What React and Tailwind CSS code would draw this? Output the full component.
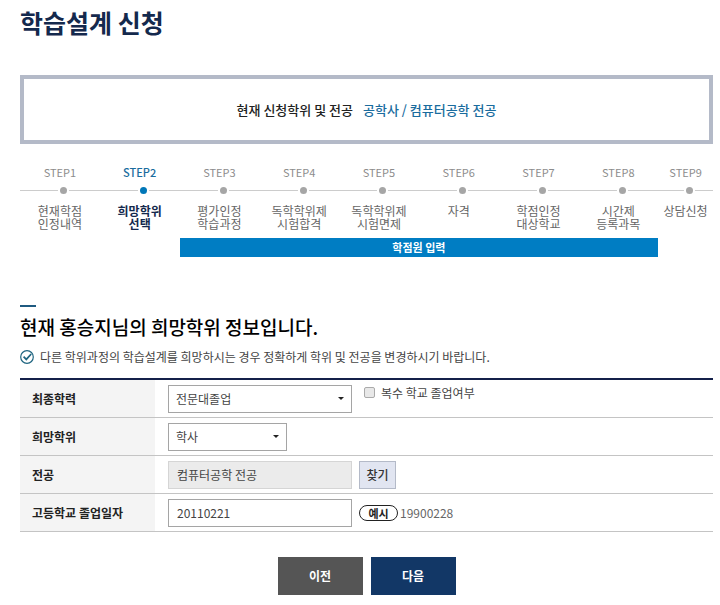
const steps = [
  { id: 1, lines: ['현재학점', '인정내역'] },
  { id: 2, lines: ['희망학위', '선택'], active: true },
  { id: 3, lines: ['평가인정', '학습과정'] },
  { id: 4, lines: ['독학학위제', '시험합격'] },
  { id: 5, lines: ['독학학위제', '시험면제'] },
  { id: 6, lines: ['자격'] },
  { id: 7, lines: ['학점인정', '대상학교'] },
  { id: 8, lines: ['시간제', '등록과목'] },
  { id: 9, lines: ['상담신청'] },
];

function Step({ step }) {
  return (
    <li
      aria-current={step.active ? 'step' : undefined}
      className="flex flex-col items-center text-center"
    >
      <span className={step.active ? 'text-[11px] leading-4 font-medium text-[#1a6c9e]' : 'text-[11px] leading-4 text-[#8c8c8c]'}>
        STEP{step.id}
      </span>
      <span className="mt-1 grid h-3 w-full grid-cols-[1fr_7px_1fr] items-center">
        <span className="-mr-1 h-px bg-[#ccc]" />
        <span
          className={
            step.active
              ? 'z-10 ml-1 size-[7px] rounded-full bg-[#0077b8] ring-2 ring-white'
              : 'z-10 ml-1 size-[7px] rounded-full bg-[#a6a6a6] ring-2 ring-white'
          }
        />
        <span className="h-px bg-[#ccc]" />
      </span>
      <span
        className={
          step.active
            ? 'mt-2 text-xs leading-[13px] font-bold whitespace-nowrap text-[#14294d]'
            : 'mt-2 text-xs leading-[13px] whitespace-nowrap text-[#666]'
        }
      >
        {step.lines.map((line) => (
          <span key={line} className="block">{line}</span>
        ))}
      </span>
    </li>
  );
}

function Select({ id, value, className }) {
  return (
    <span className={`relative inline-block ${className}`}>
      <select
        id={id}
        defaultValue={value}
        className="block h-7 w-full appearance-none border border-[#a5a5a5] bg-white px-[7px] text-xs text-[#444]"
      >
        <option>{value}</option>
      </select>
      <svg viewBox="0 0 6 3" className="pointer-events-none absolute top-3 right-2 h-[3px] w-1.5 fill-[#222]">
        <path d="M0 0h6L3 3z" />
      </svg>
    </span>
  );
}

function Row({ label, htmlFor, children }) {
  return (
    <tr className="h-[38px]">
      <th scope="row" className="w-[135px] border-b border-[#c4c4c4] bg-[#f4f4f4] p-0 pl-3 text-left font-bold text-[#222]">
        <label htmlFor={htmlFor}>{label}</label>
      </th>
      <td className="border-b border-[#c4c4c4] p-0 pl-[13px]">
        <div className="flex items-center">{children}</div>
      </td>
    </tr>
  );
}

export default function App() {
  return (
    <main className="bg-white pr-[7px] pb-2 pl-5 font-['Noto_Sans_CJK_KR','Noto_Sans',sans-serif] text-xs text-[#444]">
      <h1 className="pt-1 text-[25px] leading-9 font-bold text-[#14294d]">학습설계 신청</h1>

      <p className="mt-[35px] flex h-[69px] items-center justify-center gap-2.5 border-4 border-[#b4bac8] text-[13px] font-medium">
        <span className="text-[#222]">현재 신청학위 및 전공</span>
        <span className="text-[#1a6c9e]">공학사 / 컴퓨터공학 전공</span>
      </p>

      <ol className="mt-5 grid grid-cols-[repeat(8,80fr)_55fr]">
        {steps.map((step) => (
          <Step key={step.id} step={step} />
        ))}
      </ol>
      <div className="mt-2 grid grid-cols-[repeat(8,80fr)_55fr]">
        <p className="col-start-3 col-end-9 bg-[#007dc3] text-center text-[11px] leading-[19px] font-bold text-white">
          학점원 입력
        </p>
      </div>

      <section className="mt-12">
        <div className="h-0.5 w-4 bg-[#1f5a80]" />
        <h2 className="mt-1.5 text-[19px] leading-7 font-medium text-black">현재 홍승지님의 희망학위 정보입니다.</h2>
        <p className="mt-1.5 flex items-center gap-1.5 leading-5">
          <svg viewBox="0 0 14 14" className="size-3.5 fill-none stroke-[#1f6580]" aria-hidden="true">
            <circle cx="7" cy="7" r="6.3" strokeWidth="1.2" />
            <path d="M3.6 6.6L6.3 9.4L11.2 4" strokeWidth="1.7" />
          </svg>
          다른 학위과정의 학습설계를 희망하시는 경우 정확하게 학위 및 전공을 변경하시기 바랍니다.
        </p>

        <table className="mt-[11px] w-full border-separate border-spacing-0 border-t-2 border-[#14204a]">
          <tbody>
            <Row label="최종학력" htmlFor="education">
              <Select id="education" value="전문대졸업" className="w-[184px]" />
              <label className="ml-3 flex items-center gap-1.5 self-start">
                <input type="checkbox" className="size-[11px] appearance-none rounded-[2px] border border-[#aaa] bg-[#e8e8e8]" />
                복수 학교 졸업여부
              </label>
            </Row>
            <Row label="희망학위" htmlFor="degree">
              <Select id="degree" value="학사" className="w-[119px]" />
            </Row>
            <Row label="전공" htmlFor="major">
              <input id="major" readOnly defaultValue="컴퓨터공학 전공" className="h-7 w-[184px] border border-[#d5d5d5] bg-[#ebebeb] px-2" />
              <button type="button" className="ml-[7px] h-7 w-[37px] border border-[#b4bac8] bg-[#e1e5f1] font-medium text-[#333]">찾기</button>
            </Row>
            <Row label="고등학교 졸업일자" htmlFor="graduation">
              <input id="graduation" defaultValue="20110221" className="h-7 w-[184px] border border-[#a5a5a5] bg-white px-2" />
              <span className="ml-[7px] h-4 w-[39px] rounded-full border border-[#222] text-center text-[11px] leading-[14px] font-bold text-[#222]">예시</span>
              <span className="ml-0.5 text-[#666]">19900228</span>
            </Row>
          </tbody>
        </table>
      </section>

      <div className="mt-[25px] flex justify-center gap-2">
        <button type="button" className="h-[38px] w-[85px] bg-[#555] font-bold text-white">이전</button>
        <button type="button" className="h-[38px] w-[85px] bg-[#123766] font-bold text-white">다음</button>
      </div>
    </main>
  );
}
